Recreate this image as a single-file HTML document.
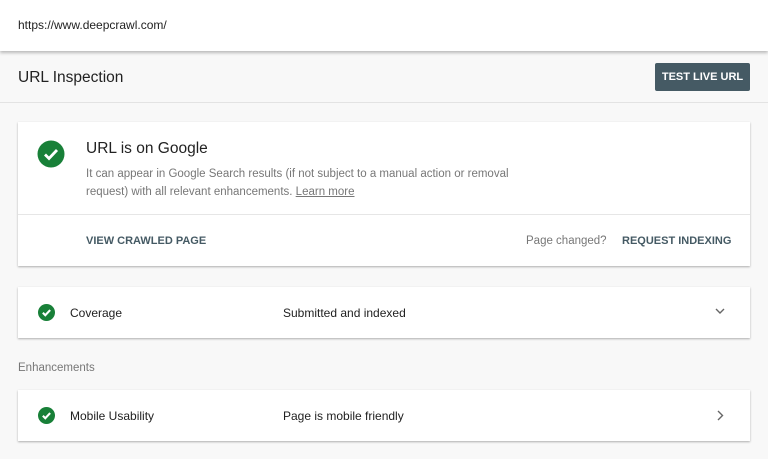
<!DOCTYPE html>
<html><head><style>
*{margin:0;padding:0;box-sizing:border-box}
body{width:768px;height:459px;background:#f8f8f8;font-family:"Liberation Sans",sans-serif;color:#212121;position:relative;overflow:hidden}
.top{position:absolute;left:0;top:0;width:768px;height:51px;background:#fff;box-shadow:0 2px 3px rgba(0,0,0,.25);z-index:2}
.top span{position:absolute;left:18px;top:18px;font-size:12px;color:#222}
.h{position:absolute;left:18px;top:69px;font-size:15.5px;color:#222}
.btn{position:absolute;left:655px;top:63px;width:95px;height:28px;background:#455a64;color:#fff;font-size:11px;font-weight:bold;text-align:center;line-height:28px;border-radius:2px}
.line{position:absolute;left:0;top:102px;width:768px;height:1px;background:#e3e3e3}
.card{position:absolute;left:18px;width:732px;background:#fff;box-shadow:0 1px 2px rgba(0,0,0,.3)}
.chk{position:absolute}
.t{position:absolute;font-size:12px;white-space:nowrap}
</style></head><body>
<div class="top"><span>https://www.deepcrawl.com/</span></div>
<div class="h">URL Inspection</div>
<div class="btn">TEST LIVE URL</div>
<div class="line"></div>
<div class="card" style="top:122px;height:144px">
<svg class="chk" style="left:19px;top:18px" width="28" height="28" viewBox="0 0 28 28"><circle cx="14" cy="14" r="13.5" fill="#188038"/><path d="M8 14.5l4 4 8-8.5" stroke="#fff" stroke-width="2.8" fill="none"/></svg>
<div class="t" style="left:68px;top:18px;font-size:15.5px;color:#222">URL is on Google</div>
<div class="t" style="left:68px;top:43px;color:#777;font-size:11.5px;line-height:18px;white-space:normal;width:450px">It can appear in Google Search results (if not subject to a manual action or removal request) with all relevant enhancements. <u>Learn more</u></div>
<div style="position:absolute;left:0;top:92px;width:732px;height:1px;background:#e6e6e6"></div>
<div class="t" style="left:68px;top:113px;font-size:11px;font-weight:bold;color:#455a64">VIEW CRAWLED PAGE</div>
<div class="t" style="left:508px;top:113px;font-size:11.5px;color:#777">Page changed?</div>
<div class="t" style="left:604px;top:113px;font-size:11px;font-weight:bold;color:#455a64">REQUEST INDEXING</div>
</div>
<div class="card" style="top:287px;height:51px">
<svg class="chk" style="left:20px;top:17px" width="17" height="17" viewBox="0 0 28 28"><circle cx="14" cy="14" r="14" fill="#188038"/><path d="M8 14.5l4 4 8-8.5" stroke="#fff" stroke-width="3.5" fill="none"/></svg>
<div class="t" style="left:52px;top:19px">Coverage</div>
<div class="t" style="left:265px;top:19px">Submitted and indexed</div>
<svg style="position:absolute;left:697px;top:21px" width="10" height="7" viewBox="0 0 10 7"><path d="M1 1l4 4 4-4" stroke="#666" stroke-width="1.4" fill="none"/></svg>
</div>
<div class="t" style="left:18px;top:362px;color:#777;font-size:11.5px">Enhancements</div>
<div class="card" style="top:390px;height:51px">
<svg class="chk" style="left:20px;top:17px" width="17" height="17" viewBox="0 0 28 28"><circle cx="14" cy="14" r="14" fill="#188038"/><path d="M8 14.5l4 4 8-8.5" stroke="#fff" stroke-width="3.5" fill="none"/></svg>
<div class="t" style="left:52px;top:19px">Mobile Usability</div>
<div class="t" style="left:265px;top:19px">Page is mobile friendly</div>
<svg style="position:absolute;left:699px;top:20px" width="7" height="11" viewBox="0 0 7 11"><path d="M1 1l4.5 4.5L1 10" stroke="#666" stroke-width="1.4" fill="none"/></svg>
</div>
</body></html>
